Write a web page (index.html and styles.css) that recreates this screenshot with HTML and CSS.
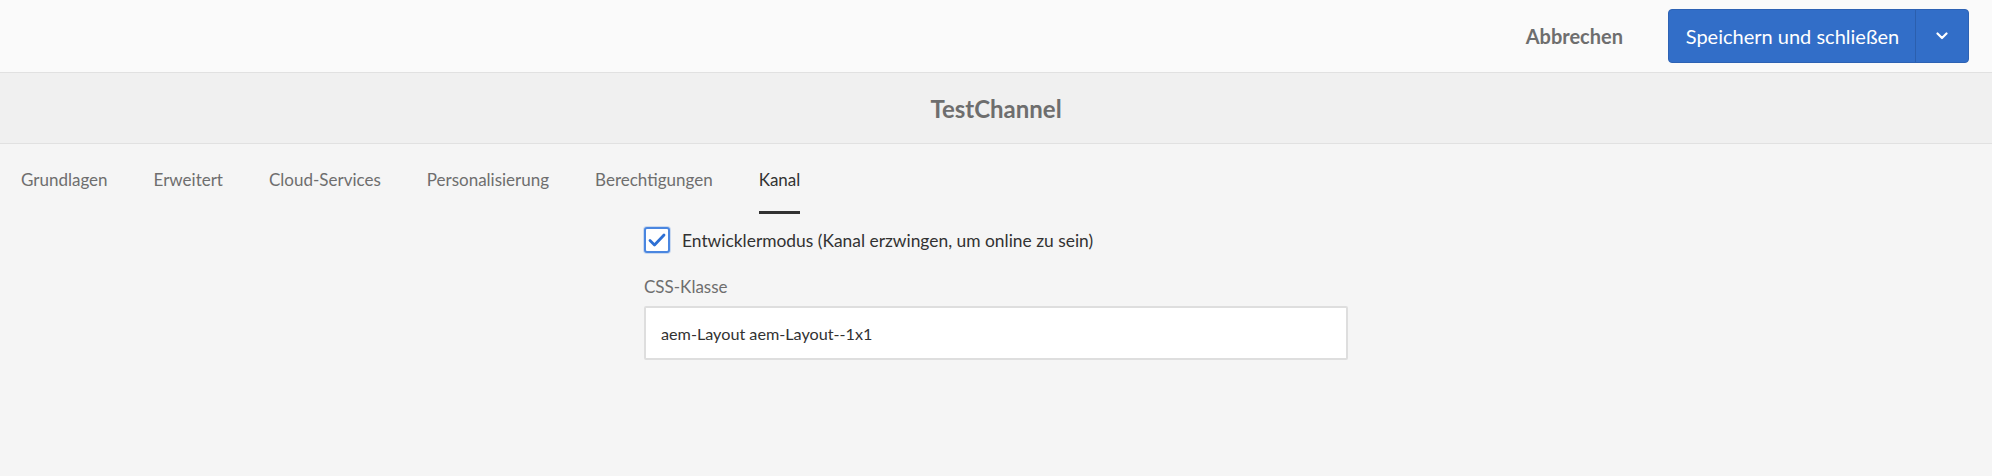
FILE: index.html
```html
<!DOCTYPE html>
<html lang="de">
<head>
<meta charset="utf-8">
<title>TestChannel</title>
<link rel="stylesheet" href="styles.css">
</head>
<body>
<header class="topbar">
  <button class="btn-quiet">Abbrechen</button>
  <div class="split">
    <button class="split-main">Speichern und schließen</button>
    <button class="split-toggle" aria-label="Mehr">
      <svg width="12" height="8" viewBox="0 0 12 8"><path d="M1.5 1.5 L6 6 L10.5 1.5" fill="none" stroke="#fff" stroke-width="2.2" stroke-linecap="round" stroke-linejoin="round"/></svg>
    </button>
  </div>
</header>
<div class="titlebar">TestChannel</div>
<nav class="tabs">
  <div class="tab">Grundlagen</div>
  <div class="tab">Erweitert</div>
  <div class="tab">Cloud-Services</div>
  <div class="tab">Personalisierung</div>
  <div class="tab">Berechtigungen</div>
  <div class="tab active">Kanal</div>
</nav>
<main class="form">
  <label class="check">
    <span class="box">
      <svg width="18" height="14" viewBox="0 0 18 14"><path d="M2 7.5 L6.5 12 L16 2" fill="none" stroke="#2d6fd4" stroke-width="2.8" stroke-linecap="round" stroke-linejoin="round"/></svg>
    </span>
    <span class="check-label">Entwicklermodus (Kanal erzwingen, um online zu sein)</span>
  </label>
  <div class="field-label">CSS-Klasse</div>
  <div class="input">aem-Layout aem-Layout--1x1</div>
</main>
</body>
</html>
```
FILE: styles.css
```css
html, body {
  margin: 0;
  padding: 0;
}
body {
  background: #f5f5f5;
  font-family: Lato, "Open Sans", sans-serif;
  color: #4b4b4b;
  height: 476px;
  overflow: hidden;
}
.topbar {
  height: 72px;
  background: #fafafa;
  border-bottom: 1px solid #e1e1e1;
  display: flex;
  justify-content: flex-end;
  align-items: center;
  padding-right: 23px;
}
.btn-quiet {
  background: none;
  border: none;
  font-family: inherit;
  font-size: 20px;
  font-weight: 700;
  color: #6e6e6e;
  padding: 0;
  margin-right: 45px;
}
.split {
  display: flex;
  height: 54px;
  background: #326ec8;
  border: 1px solid #2d62b4;
  border-radius: 4px;
  box-sizing: border-box;
  width: 301px;
}
.split-main {
  width: 247px;
  background: none;
  border: none;
  border-right: 1px solid #2b5fae;
  color: #fff;
  font-family: inherit;
  font-size: 20px;
  padding: 0 0 0 1px;
}
.split-toggle {
  flex: 1;
  background: none;
  border: none;
  display: flex;
  align-items: center;
  justify-content: center;
  padding: 0;
}
.titlebar {
  height: 70px;
  background: #f0f0f0;
  border-bottom: 1px solid #e1e1e1;
  display: flex;
  align-items: center;
  justify-content: center;
  font-size: 24px;
  font-weight: 700;
  color: #6e6e6e;
}
.tabs {
  display: flex;
  padding-left: 21px;
  gap: 46px;
  height: 70px;
}
.tab {
  font-size: 17px;
  color: #6e6e6e;
  display: flex;
  align-items: center;
  padding-top: 3px;
  box-sizing: border-box;
  height: 70px;
  border-bottom: 3px solid transparent;
}
.tab.active {
  color: #323232;
  border-bottom-color: #323232;
}
.form {
  padding-left: 644px;
  padding-top: 13px;
}
.check {
  display: flex;
  align-items: center;
  height: 26px;
}
.box {
  width: 26px;
  height: 26px;
  box-sizing: border-box;
  border: 2px solid #4a86e0;
  border-radius: 3px;
  background: #fff;
  box-shadow: 0 0 0 1px rgba(74,134,224,0.25);
  display: flex;
  align-items: center;
  justify-content: center;
}
.check-label {
  margin-left: 12px;
  font-size: 17.4px;
  color: #323232;
}
.field-label {
  margin-top: 22px;
  font-size: 17px;
  color: #6e6e6e;
  line-height: 24px;
}
.input {
  margin-top: 7px;
  width: 704px;
  height: 54px;
  box-sizing: border-box;
  background: #fff;
  border: 2px solid #dedede;
  border-radius: 2px;
  display: flex;
  align-items: center;
  padding-left: 15px;
  font-size: 16.2px;
  color: #323232;
}
```
